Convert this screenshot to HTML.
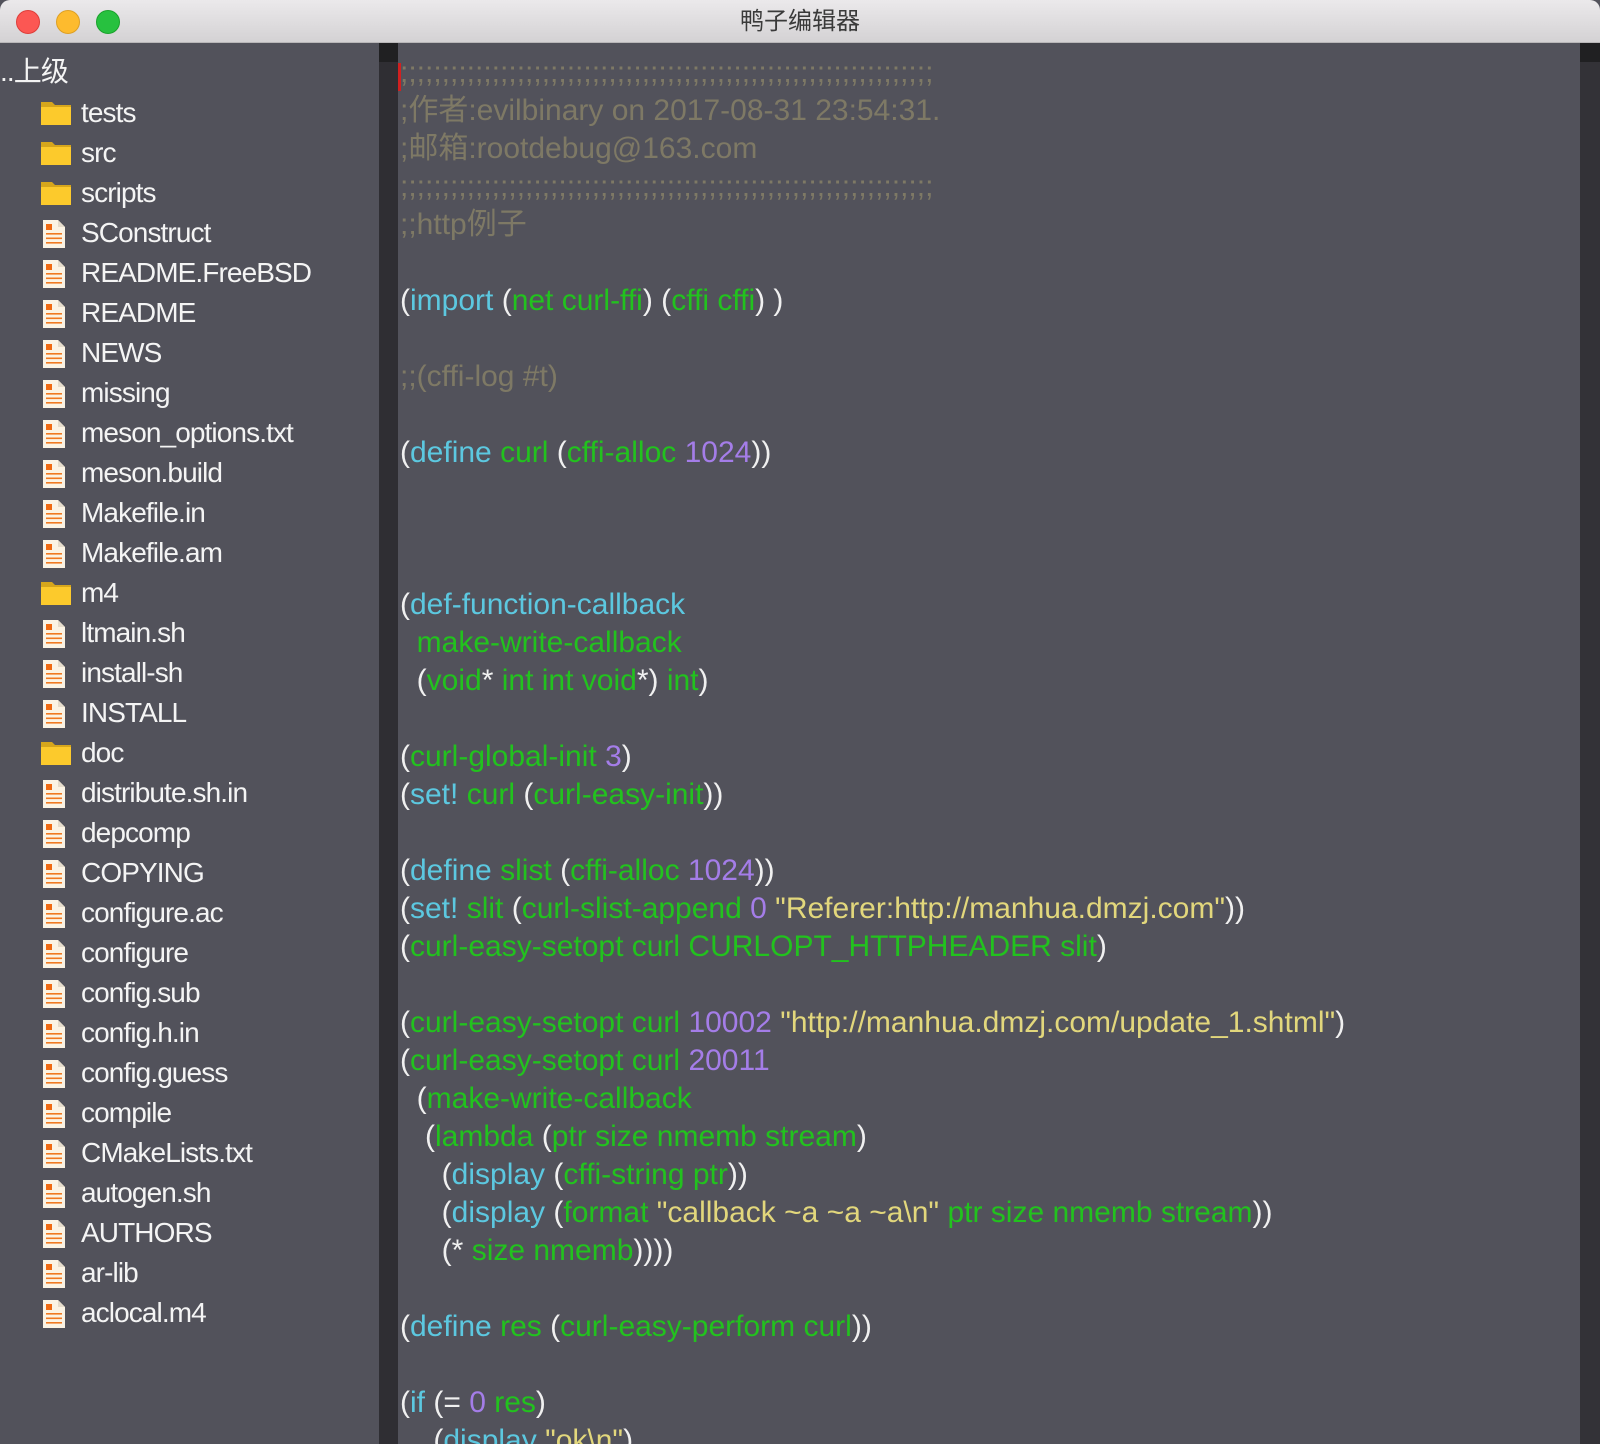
<!DOCTYPE html>
<html><head><meta charset="utf-8">
<style>
*{margin:0;padding:0;box-sizing:border-box}
html,body{width:1600px;height:1444px;overflow:hidden;background:#52525b}
body{position:relative;font-family:"Liberation Sans","Noto Sans CJK SC",sans-serif}
.title{position:absolute;left:0;top:0;width:1600px;height:43px;background:linear-gradient(#ebe9eb,#d4d2d4);border-bottom:1px solid #b9b7b9;border-radius:10px 10px 0 0;text-align:center;font-size:24px;line-height:44px;color:#3a3a3a}
.dot{position:absolute;top:10px;width:24px;height:24px;border-radius:50%}
.side{position:absolute;left:0;top:43px;width:379px;height:1401px;background:#52525b}
.side div{position:absolute;left:81px;height:40px;line-height:40px;font-size:28px;letter-spacing:-0.9px;color:#f4f4f4;white-space:pre}
.side svg{position:absolute;left:-41px;top:6px}
.gut{position:absolute;left:379px;top:43px;width:19px;height:1401px;background:#2f2e33}
.gut2{position:absolute;left:379px;top:43px;width:19px;height:19px;background:#202022}
.sb{position:absolute;left:1580px;top:43px;width:20px;height:1401px;background:#333237}
.sb2{position:absolute;left:1580px;top:43px;width:20px;height:19px;background:#202022}
.code{position:absolute;left:400px;top:54px;font-size:30px;line-height:38px;color:#f0f0f0;white-space:pre}
.k{color:#5cc8e0}.g{color:#22c21e}.n{color:#a47de8}.s{color:#e2d77c}.c{color:#7e7965}
.cur{position:absolute;left:398px;top:63px;width:3px;height:28px;background:#d02020}
</style></head><body>
<div class="title">鸭子编辑器
<div class="dot" style="left:16px;background:#fc5753;border:1px solid #de3e3a"></div>
<div class="dot" style="left:56px;background:#fdbb2e;border:1px solid #dea024"></div>
<div class="dot" style="left:96px;background:#27c13f;border:1px solid #1aa22c"></div>
</div>
<div class="side" id="side"></div>
<div class="gut"></div><div class="gut2"></div>
<div class="sb"></div><div class="sb2"></div>
<div class="cur"></div>
<div class="code"><span class="c">;;;;;;;;;;;;;;;;;;;;;;;;;;;;;;;;;;;;;;;;;;;;;;;;;;;;;;;;;;;;;;;;
;作者:evilbinary on 2017-08-31 23:54:31.
;邮箱:rootdebug@163.com
;;;;;;;;;;;;;;;;;;;;;;;;;;;;;;;;;;;;;;;;;;;;;;;;;;;;;;;;;;;;;;;;
;;http例子</span>

(<span class="k">import</span> (<span class="g">net curl-ffi</span>) (<span class="g">cffi cffi</span>) )

<span class="c">;;(cffi-log #t)</span>

(<span class="k">define</span> <span class="g">curl</span> (<span class="g">cffi-alloc</span> <span class="n">1024</span>))



(<span class="k">def-function-callback</span>
  <span class="g">make-write-callback</span>
  (<span class="g">void</span>* <span class="g">int int void</span>*) <span class="g">int</span>)

(<span class="g">curl-global-init</span> <span class="n">3</span>)
(<span class="k">set!</span> <span class="g">curl</span> (<span class="g">curl-easy-init</span>))

(<span class="k">define</span> <span class="g">slist</span> (<span class="g">cffi-alloc</span> <span class="n">1024</span>))
(<span class="k">set!</span> <span class="g">slit</span> (<span class="g">curl-slist-append</span> <span class="n">0</span> <span class="s">"Referer:http://manhua.dmzj.com"</span>))
(<span class="g">curl-easy-setopt curl CURLOPT_HTTPHEADER slit</span>)

(<span class="g">curl-easy-setopt curl</span> <span class="n">10002</span> <span class="s">"http://manhua.dmzj.com/update_1.shtml"</span>)
(<span class="g">curl-easy-setopt curl</span> <span class="n">20011</span>
  (<span class="g">make-write-callback</span>
   (<span class="g">lambda</span> (<span class="g">ptr size nmemb stream</span>)
     (<span class="k">display</span> (<span class="g">cffi-string ptr</span>))
     (<span class="k">display</span> (<span class="g">format</span> <span class="s">"callback ~a ~a ~a\n"</span> <span class="g">ptr size nmemb stream</span>))
     (* <span class="g">size nmemb</span>))))

(<span class="k">define</span> <span class="g">res</span> (<span class="g">curl-easy-perform curl</span>))

(<span class="k">if</span> (= <span class="n">0</span> <span class="g">res</span>)
    (<span class="k">display</span> <span class="s">"ok\n"</span>)</div>
<script>
var items=[["tests",1],["src",1],["scripts",1],["SConstruct",0],["README.FreeBSD",0],["README",0],["NEWS",0],["missing",0],["meson_options.txt",0],["meson.build",0],["Makefile.in",0],["Makefile.am",0],["m4",1],["ltmain.sh",0],["install-sh",0],["INSTALL",0],["doc",1],["distribute.sh.in",0],["depcomp",0],["COPYING",0],["configure.ac",0],["configure",0],["config.sub",0],["config.h.in",0],["config.guess",0],["compile",0],["CMakeLists.txt",0],["autogen.sh",0],["AUTHORS",0],["ar-lib",0],["aclocal.m4",0]];
var folder='<svg width="32" height="28" viewBox="0 0 32 28"><path d="M1 3h11l3 3h16v20H1z" fill="#d6a61c"/><rect x="1" y="8" width="30" height="18" fill="#fcca2c"/></svg>';
var file='<svg width="28" height="30" viewBox="0 0 28 30"><path d="M3 1h15l7 7v21H3z" fill="#fbf3e4"/><path d="M18 1v7h7" fill="#e6dccb"/><rect x="6" y="5" width="6" height="6" fill="#f06a12"/><rect x="6" y="14" width="16" height="1.6" fill="#f07a22"/><rect x="6" y="18.5" width="16" height="1.6" fill="#f07a22"/><rect x="6" y="23" width="16" height="1.6" fill="#f07a22"/></svg>';
var h='<div style="left:0;top:9px">..上级</div>';
items.forEach(function(it,i){h+='<div style="top:'+(50+i*40)+'px">'+(it[1]?folder:file)+it[0]+'</div>';});
document.getElementById('side').innerHTML=h;
</script>
</body></html>
